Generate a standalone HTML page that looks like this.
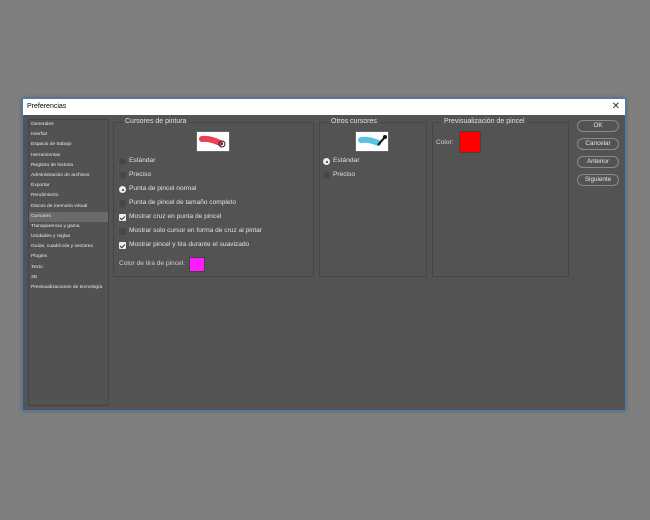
<!DOCTYPE html>
<html><head><meta charset="utf-8"><style>
*{margin:0;padding:0;box-sizing:border-box}
body{width:650px;height:520px;background:#7f7f7f;position:relative;overflow:hidden;font-family:"Liberation Sans",sans-serif;color:#dcdcdc}
.dlg{position:absolute;left:22px;top:98px;width:604px;height:313px;background:#535353;border:1px solid #3d7fc6;box-shadow:0 0 4px rgba(0,0,0,.3)}
.title{position:absolute;left:0;top:0;width:602px;height:16px;background:#fff;color:#000;font-size:7px;line-height:16px;padding-left:4px}
.x{position:absolute;right:5px;top:0;font-size:10px;color:#333}
.side{position:absolute;left:5px;top:20px;width:81px;height:287px;border:1px solid #444;background:#525252}
.side div{height:10.2px;font-size:4.9px;line-height:10.2px;padding-left:2px;color:#e8e8e8;white-space:nowrap}
.side .sel{background:#6a6a6a}
.panel{position:absolute;border:1px solid #464646;top:23px}
.pt{position:absolute;top:-5px;left:8px;background:#535353;padding:0 3px;font-size:7px;color:#e0e0e0}
.t{position:absolute;font-size:6.6px;color:#e2e2e2;white-space:nowrap}
.r{position:absolute;width:7px;height:7px;border-radius:50%;background:#474747}
.r.on{background:#eee;border:2px solid #eee}
.r.on::after{content:"";position:absolute;left:0.5px;top:0.5px;width:2px;height:2px;border-radius:50%;background:#333}
.c{position:absolute;width:7px;height:7px;background:#eee;border-radius:1px}
.c.off{background:#474747}
.c.on::after{content:"";position:absolute;left:1.5px;top:0.5px;width:2px;height:4px;border:solid #333;border-width:0 1.3px 1.3px 0;transform:rotate(45deg)}
.btn{position:absolute;left:554px;width:42px;height:12px;border:1px solid #8a8a8a;border-radius:6px;font-size:6.3px;text-align:center;line-height:10px;color:#e6e6e6}
.ico{position:absolute;width:34px;height:21px;background:#fff;border:1px solid #666}
</style></head><body>
<div class="dlg">
<div class="title">Preferencias<span class="x">✕</span></div>
<div class="side">
<div>Generales</div><div>Interfaz</div><div>Espacio de trabajo</div><div>Herramientas</div><div>Registro de historia</div><div>Administración de archivos</div><div>Exportar</div><div>Rendimiento</div><div>Discos de memoria virtual</div><div class="sel">Cursores</div><div>Transparencia y gama</div><div>Unidades y reglas</div><div>Guías, cuadrícula y sectores</div><div>Plugins</div><div>Texto</div><div>3D</div><div>Previsualizaciones de tecnología</div>
</div>
<div class="panel" style="left:90px;width:201px;height:155px"><span class="pt">Cursores de pintura</span></div>
<div class="ico" style="left:173px;top:32px"><svg width="32" height="19"><path d="M5 7 Q13 6 23 11" stroke="#e8102a" stroke-width="6" fill="none" stroke-linecap="round" opacity=".8"/><circle cx="25" cy="12" r="3" fill="none" stroke="#222"/><circle cx="25" cy="12" r="1" fill="#222"/></svg></div>
<div class="r" style="left:96px;top:59px"></div><div class="t" style="left:106px;top:58px">Estándar</div>
<div class="r" style="left:96px;top:73px"></div><div class="t" style="left:106px;top:72px">Preciso</div>
<div class="r on" style="left:96px;top:87px"></div><div class="t" style="left:106px;top:86px">Punta de pincel normal</div>
<div class="r" style="left:96px;top:101px"></div><div class="t" style="left:106px;top:100px">Punta de pincel de tamaño completo</div>
<div class="c on" style="left:96px;top:115px"></div><div class="t" style="left:106px;top:114px">Mostrar cruz en punta de pincel</div>
<div class="c off" style="left:96px;top:129px"></div><div class="t" style="left:106px;top:128px">Mostrar solo cursor en forma de cruz al pintar</div>
<div class="c on" style="left:96px;top:143px"></div><div class="t" style="left:106px;top:142px">Mostrar pincel y tira durante el suavizado</div>
<div class="t" style="left:96px;top:161px;color:#cfcfcf">Color de tira de pincel:</div>
<div style="position:absolute;left:166px;top:158px;width:16px;height:15px;background:#ff1aff;border:1px solid #444"></div>
<div class="panel" style="left:296px;width:108px;height:155px"><span class="pt">Otros cursores</span></div>
<div class="ico" style="left:332px;top:32px"><svg width="32" height="19"><path d="M5 8 Q13 7 22 11" stroke="#2ab4e0" stroke-width="6" fill="none" stroke-linecap="round" opacity=".8"/><path d="M22 13 L29 5" stroke="#111" stroke-width="2"/><circle cx="29" cy="5" r="2" fill="#111"/></svg></div>
<div class="r on" style="left:300px;top:59px"></div><div class="t" style="left:310px;top:58px">Estándar</div>
<div class="r" style="left:300px;top:73px"></div><div class="t" style="left:310px;top:72px">Preciso</div>
<div class="panel" style="left:409px;width:137px;height:155px"><span class="pt">Previsualización de pincel</span></div>
<div class="t" style="left:413px;top:40px;color:#cfcfcf">Color:</div>
<div style="position:absolute;left:436px;top:32px;width:22px;height:22px;background:#ff0000;border:1px solid #444"></div>
<div class="btn" style="top:21px">OK</div>
<div class="btn" style="top:39px">Cancelar</div>
<div class="btn" style="top:57px">Anterior</div>
<div class="btn" style="top:75px">Siguiente</div>
</div>
</body></html>
